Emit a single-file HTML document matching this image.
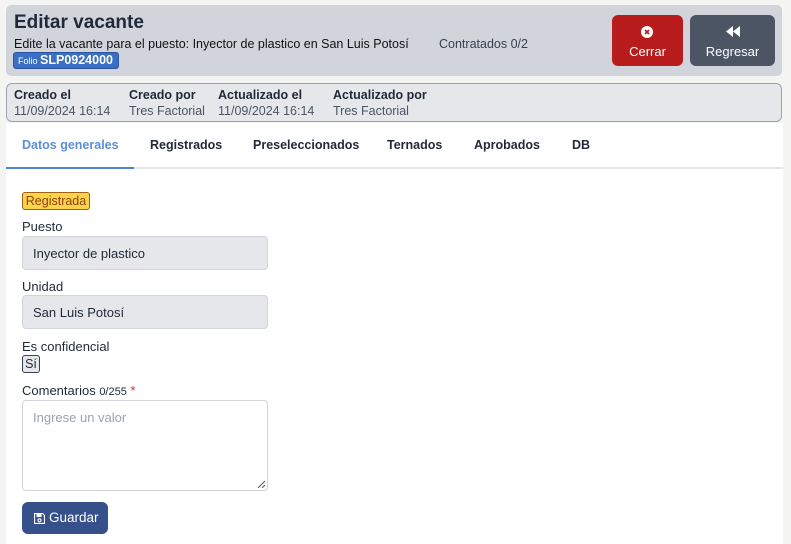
<!DOCTYPE html>
<html><head><meta charset="utf-8"><style>
*{box-sizing:border-box;margin:0;padding:0}
body{width:791px;height:544px;background:#f4f4f3;font-family:"Liberation Sans",sans-serif;color:#1f2937;position:relative;overflow:hidden;font-size:13px}
.abs{position:absolute}
.hdr{left:6px;top:5px;width:776px;height:71px;background:#d1d5db;border-radius:5px}
.btn{position:absolute;border-radius:6px;color:#fff;text-align:center;font-size:13px}
.meta{left:6px;top:83px;width:776px;height:39px;background:#e5e7eb;border:1px solid #9ca3af;border-radius:6px}
.m{font-size:12.5px}
.white{left:6px;top:123px;width:777px;height:421px;background:#fff}
.tab{position:absolute;top:138px;font-weight:bold;font-size:12.5px;color:#1f2937}
.lbl{position:absolute;left:22px;font-size:13px;color:#1f2937}
.inp{position:absolute;left:22px;width:246px;height:34px;background:#e5e7eb;border:1px solid #d1d5db;border-radius:4px;padding:9px 10px;font-size:13px}
</style></head><body>
<div class="abs hdr"></div>
<div class="abs" style="left:14px;top:12px;font-size:19px;font-weight:bold;color:#1f2937">Editar vacante</div>
<div class="abs" style="left:14px;top:37px;font-size:12.5px;color:#111">Edite la vacante para el puesto: Inyector de plastico en San Luis Potosí</div>
<div class="abs" style="left:439px;top:37px;font-size:12.5px;color:#374151">Contratados 0/2</div>
<div class="abs" style="left:13px;top:52px;width:106px;height:17px;background:#3b6fc4;border:1px solid #2b55a0;border-radius:3px;color:#fff;font-size:9px;padding-left:4px;line-height:15px">Folio <b style="font-size:12.5px">SLP0924000</b></div>
<div class="btn" style="left:612px;top:15px;width:71px;height:51px;background:#b91c1c">
<svg width="12" height="12" viewBox="0 0 12 12" style="position:absolute;left:29px;top:11px"><circle cx="6" cy="6" r="6" fill="#fff"/><path d="M4 4L8 8M8 4L4 8" stroke="#b91c1c" stroke-width="1.6"/></svg>
<div style="position:absolute;left:0;right:0;top:29px">Cerrar</div></div>
<div class="btn" style="left:690px;top:15px;width:85px;height:51px;background:#4b5563">
<svg width="14" height="11" viewBox="0 0 14 11" style="position:absolute;left:36px;top:11px"><path d="M7 0L0 5.5L7 11Z M14 0L7 5.5L14 11Z" fill="#fff"/></svg>
<div style="position:absolute;left:0;right:0;top:29px">Regresar</div></div>

<div class="abs meta"></div>
<div class="abs m" style="left:14px;top:88px;font-weight:bold">Creado el</div>
<div class="abs m" style="left:14px;top:104px;color:#4b5563">11/09/2024 16:14</div>
<div class="abs m" style="left:129px;top:88px;font-weight:bold">Creado por</div>
<div class="abs m" style="left:129px;top:104px;color:#4b5563">Tres Factorial</div>
<div class="abs m" style="left:218px;top:88px;font-weight:bold">Actualizado el</div>
<div class="abs m" style="left:218px;top:104px;color:#4b5563">11/09/2024 16:14</div>
<div class="abs m" style="left:333px;top:88px;font-weight:bold">Actualizado por</div>
<div class="abs m" style="left:333px;top:104px;color:#4b5563">Tres Factorial</div>

<div class="abs white"></div>
<div class="tab" style="left:22px;color:#5b8fd6">Datos generales</div>
<div class="tab" style="left:150px">Registrados</div>
<div class="tab" style="left:253px">Preseleccionados</div>
<div class="tab" style="left:387px">Ternados</div>
<div class="tab" style="left:474px">Aprobados</div>
<div class="tab" style="left:572px">DB</div>
<div class="abs" style="left:6px;top:167px;width:777px;height:2px;background:#e5e7eb"></div>
<div class="abs" style="left:6px;top:167px;width:128px;height:2px;background:#4a86d8"></div>

<div class="abs" style="left:22px;top:192px;width:68px;height:18px;background:#fcd34d;border:1px solid #a0620c;border-radius:3px;color:#92400e;font-size:12.5px;line-height:16px;text-align:center">Registrada</div>
<div class="lbl" style="top:219px">Puesto</div>
<div class="inp" style="top:236px">Inyector de plastico</div>
<div class="lbl" style="top:279px">Unidad</div>
<div class="inp" style="top:295px">San Luis Potosí</div>
<div class="lbl" style="top:339px">Es confidencial</div>
<div class="abs" style="left:22px;top:355px;width:18px;height:18px;background:#e5e7eb;border:1px solid #374151;border-radius:3px;font-size:12.5px;line-height:16px;text-align:center">Sí</div>
<div class="lbl" style="top:383px">Comentarios <span style="font-size:11px">0/255</span> <span style="color:#dc2626">*</span></div>
<div class="abs" style="left:22px;top:400px;width:246px;height:91px;background:#fff;border:1px solid #d1d5db;border-radius:4px;padding:9px 10px;color:#9ca3af">Ingrese un valor
<svg width="8" height="8" viewBox="0 0 8 8" style="position:absolute;right:2px;bottom:2px"><path d="M8 1L1 8M8 5L5 8" stroke="#555" stroke-width="1"/></svg></div>
<div class="abs" style="left:22px;top:502px;width:86px;height:32px;background:#35508a;border-radius:6px;color:#fff;font-size:13.5px;line-height:32px">
<svg width="11" height="11" viewBox="0 0 11 11" style="position:absolute;left:12px;top:11px"><path d="M0.5 0.5H8.5L10.5 2.5V10.5H0.5Z" fill="none" stroke="#fff" stroke-width="1.2"/><rect x="2.5" y="1" width="5" height="3" fill="#fff"/><circle cx="5.5" cy="7.3" r="1.5" fill="none" stroke="#fff" stroke-width="1.1"/></svg>
<span style="position:absolute;left:27px">Guardar</span></div>
</body></html>
